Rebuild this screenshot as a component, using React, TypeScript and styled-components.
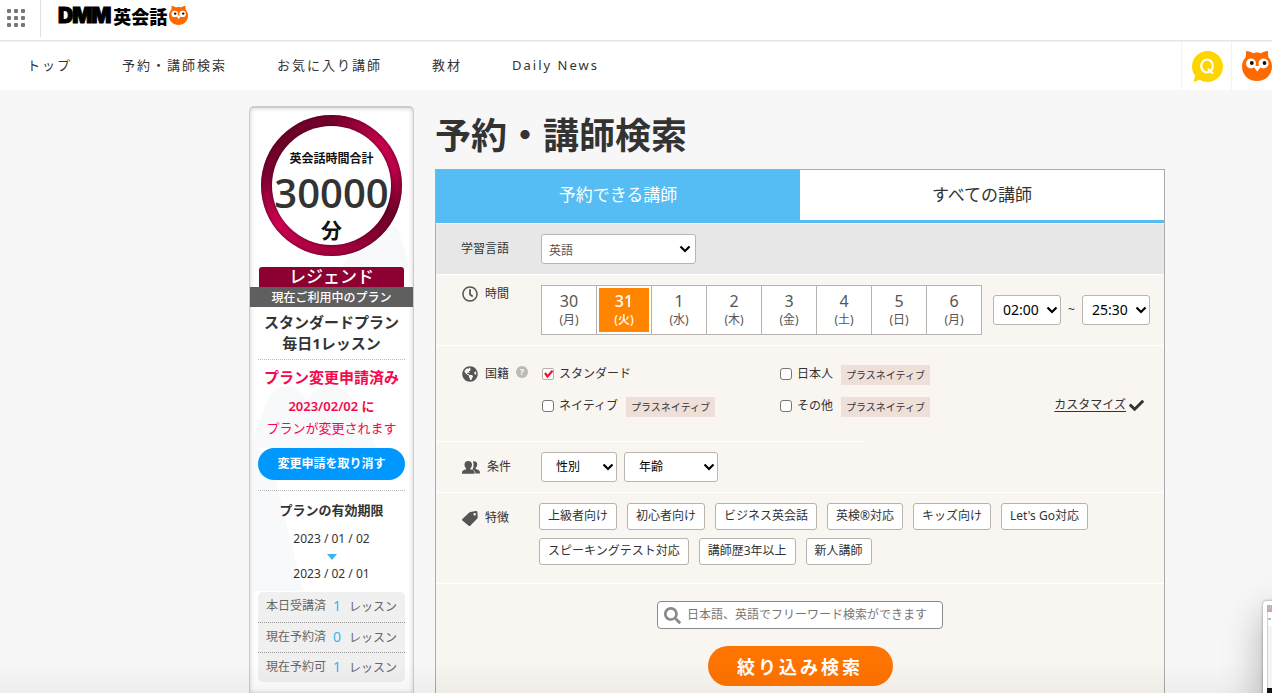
import React from 'react';
import styled, { createGlobalStyle } from 'styled-components';
import { FaRegClock, FaGlobeAmericas, FaCheck, FaSearch } from 'react-icons/fa';

const GlobalStyle = createGlobalStyle`
  *, *::before, *::after { box-sizing: border-box; }
  body {
    margin: 0;
    background: #f7f7f7;
    color: #333;
    font-family: "Noto Sans", "Noto Sans CJK JP", sans-serif;
    font-size: 12px;
    line-height: 18px;
  }
  button, input, select { font: inherit; color: inherit; margin: 0; }
  h1, h2, p, ul, dl, dd, dt { margin: 0; padding: 0; }
  ul { list-style: none; }
  a { color: inherit; text-decoration: none; }
  svg { display: block; }
`;

const Page = styled.div`
  position: relative;
  display: flex;
  flex-direction: column;
  height: 100vh;
  overflow: hidden;
`;

const BottomShade = styled.div`
  position: absolute;
  left: 0;
  right: 0;
  bottom: 0;
  height: 32px;
  background: linear-gradient(rgba(0, 0, 0, 0), rgba(0, 0, 0, 0.04));
  pointer-events: none;
`;

/* Header */
const TopBar = styled.header`
  flex: none;
  display: flex;
  align-items: center;
  height: 41px;
  padding: 0 0 3px 6px;
  background: #fff;
  border-bottom: 1px solid #e4e4e4;
`;

const AppsButton = styled.button`
  padding: 0;
  border: 0;
  background: none;
  width: 20px;
  height: 24px;
`;

const BarDivider = styled.span`
  align-self: stretch;
  width: 1px;
  margin: 0 17px 0 14px;
  background: #e0e0e0;
`;

const Logo = styled.a`
  display: flex;
  align-items: center;
  color: #000;
  padding-bottom: 6px;
`;

const LogoLatin = styled.span`
  font-family: Inter, sans-serif;
  font-weight: 900;
  font-size: 21px;
  line-height: 24px;
  letter-spacing: -1px;
  -webkit-text-stroke: 1px #000;
`;

const LogoKanji = styled.span`
  font-family: "Noto Sans CJK JP", sans-serif;
  font-weight: 900;
  font-size: 18px;
  line-height: 24px;
  margin: 0 2px 0 3px;
`;

const NavBar = styled.nav`
  flex: none;
  display: flex;
  height: 49px;
  background: #fff;
  border-top: 1px solid #f2f2f2;
  justify-content: space-between;
`;

const NavList = styled.ul`
  display: flex;
  align-items: center;
  gap: 50px;
  padding: 0 0 2px 27px;
  font-size: 13px;
  line-height: 20px;
  letter-spacing: 2px;
`;

const NavIcons = styled.div`
  display: flex;
`;

const NavIcon = styled.a`
  display: flex;
  align-items: center;
  padding: 0 0 0 10px;
  width: ${(p: { $w: number }) => p.$w}px;
  border-left: 1px solid #f2f2f2;
`;

/* Body */
const Body = styled.div`
  flex: 1;
  display: flex;
  gap: 21px;
  padding: 16px 107px 0 249px;
`;

const Side = styled.aside`
  position: relative;
  flex: none;
  width: 165px;
  background: #fff;
  border: solid #cbcbcb;
  border-width: 2px 1px 0;
  border-radius: 5px 5px 0 0;
  box-shadow: inset 0 0 5px rgba(0, 0, 0, 0.2);
  text-align: center;
  padding-top: 7px;
`;

const Hills = styled.svg`
  position: absolute;
  left: 3px;
  top: 0;
`;

const SideInner = styled.div`
  position: relative;
  display: flex;
  flex-direction: column;
`;

const Ring = styled.div`
  align-self: center;
  width: 141px;
  height: 141px;
  padding: 11px;
  border-radius: 50%;
  background: conic-gradient(#74002c, #c4004c 50deg, #b80048 75deg, #6d0028 115deg, #9c003c 160deg, #a80040 190deg, #cc0052 235deg, #7a0030 280deg, #6d0028 310deg, #74002c);
  box-shadow: inset 0 0 3px rgba(60, 0, 20, 0.8);
`;

const RingInner = styled.div`
  display: flex;
  flex-direction: column;
  align-items: center;
  height: 119px;
  padding-top: 24px;
  border-radius: 50%;
  background: #fff;
  box-shadow: 0 0 3px rgba(60, 0, 20, 0.8);
  color: #111;
  font-weight: 700;
`;

const RingTotal = styled.strong`
  font-family: "Open Sans", sans-serif;
  font-size: 40px;
  line-height: 50px;
  font-weight: 600;
  color: #333;
`;

const RingUnit = styled.span`
  font-size: 21px;
  line-height: 24px;
`;

const Rank = styled.div`
  margin: 11px 9px 0;
  height: 20px;
  border-radius: 3px 3px 0 0;
  background: #8c0032;
  color: #fff;
  font-size: 17px;
  line-height: 20px;
  font-weight: 500;
`;

const PlanCaption = styled.div`
  height: 20px;
  line-height: 21px;
  background: #5f5f5f;
  color: #fff;
  font-weight: 500;
`;

const Block = styled.div`
  margin: 0 8px;
  border-bottom: ${(p: { $rule?: boolean }) => (p.$rule ? '1px dotted #bbb' : '0')};
`;

const PlanName = styled.h2`
  font-size: 15px;
  line-height: 21px;
  font-weight: 700;
  padding: 5px 0;
`;

const Alert = styled.div`
  color: #f5094c;
  font-size: 13px;
  line-height: 22px;
  padding-top: 6px;
`;

const AlertTitle = styled.p`
  font-size: 15px;
  font-weight: 700;
  white-space: nowrap;
  margin-bottom: 7px;
`;

const AlertDate = styled.p`
  font-weight: 600;
`;

const CancelButton = styled.button`
  display: block;
  width: 100%;
  height: 32px;
  margin: 9px 0 10px;
  padding: 0;
  border: 0;
  border-radius: 16px;
  background: #0098ff;
  color: #fff;
  font-weight: 700;
`;

const Term = styled.div`
  display: flex;
  flex-direction: column;
  align-items: center;
  padding: 9px 0 9px;
`;

const TermTitle = styled.h2`
  font-size: 13px;
  line-height: 20px;
  font-weight: 700;
  margin-bottom: 10px;
`;

const Triangle = styled.span`
  margin: 6px 0 5px;
  border: solid transparent;
  border-width: 6px 5px 0;
  border-top-color: #3bb4f2;
`;

const Counts = styled.dl`
  border-radius: 5px;
  background: #f0f0f0;
  color: #666;
`;

const CountRow = styled.div`
  display: flex;
  justify-content: space-between;
  height: 30px;
  padding: 0 8px;
  line-height: 28px;
  & + & { border-top: 1px dotted #999; }
`;

const CountValue = styled.span`
  color: #3bb4f2;
  font-size: 14px;
  margin-right: 8px;
`;

const Main = styled.main`
  flex: 1;
  min-width: 0;
  display: flex;
  flex-direction: column;
`;

const Title = styled.h1`
  font-size: 36px;
  line-height: 52px;
  padding: 4px 0 7px;
  font-weight: 700;
`;

const Panel = styled.form`
  flex: 1;
  border: solid #aaa;
  border-width: 1px 1px 0;
  background: #f9f5f0;
`;

const Tabs = styled.div`
  display: grid;
  grid-template-columns: 1fr 1fr;
  height: 53px;
  border-bottom: 3px solid #55bdf3;
`;

const Tab = styled.button<{ $active?: boolean }>`
  border: 0;
  padding: 0 0 1px;
  font-size: 17px;
  color: ${(p) => (p.$active ? '#fff' : '#333')};
  background: ${(p) => (p.$active ? '#55bdf3' : '#fff')};
`;

const Row = styled.section<{ $grey?: boolean; $noRule?: boolean; $pad: string }>`
  display: flex;
  padding: ${(p) => p.$pad};
  border-top: ${(p) => (p.$noRule ? '0' : '1px solid #fff')};
  background: ${(p) => (p.$grey ? '#e7e7e7' : 'none')};
`;

const RowLabel = styled.div<{ $drop?: boolean }>`
  flex: none;
  display: flex;
  align-items: center;
  align-self: flex-start;
  gap: 7px;
  width: 80px;
  height: 18px;
  margin-top: ${(p) => (p.$drop ? 6 : 0)}px;
  white-space: nowrap;
  svg { color: #555; flex: none; margin-left: 1px; }
`;

const SelectBox = styled.span<{ $w: number }>`
  position: relative;
  display: block;
  flex: none;
  width: ${(p) => p.$w}px;
  height: 30px;
  svg { position: absolute; right: ${(p) => (p.$w > 100 ? 5 : 3)}px; top: 11px; pointer-events: none; }
`;

const SelectField = styled.select<{ $left: number; $size: number; $soft?: boolean }>`
  appearance: none;
  width: 100%;
  height: 30px;
  padding: ${(p) => (p.$soft ? 3 : 0)}px 16px 0 ${(p) => p.$left}px;
  border: 1px solid #bbb4b0;
  border-radius: 3px;
  background: #fff;
  color: ${(p) => (p.$soft ? '#555' : '#000')};
  font-size: ${(p) => p.$size}px;
`;

const Days = styled.div`
  display: flex;
  border: 1px solid #b9b3b0;
  background: #fff;
`;

const Day = styled.button<{ $on?: boolean }>`
  display: flex;
  flex-direction: column;
  align-items: center;
  width: 55px;
  height: 48px;
  padding: 5px 0 0;
  border: 0;
  background: ${(p) => (p.$on ? '#ff8500' : '#fff')};
  box-shadow: ${(p) => (p.$on ? 'inset 0 0 0 2px #fff' : 'none')};
  color: ${(p) => (p.$on ? '#fff' : '#555')};
  font-weight: ${(p) => (p.$on ? 500 : 400)};
  line-height: 18px;
  & + & { border-left: 1px solid #b9b3b0; }
  &:first-child { width: 54px; }
`;

const DayNumber = styled.span`
  font-size: 16px;
  line-height: 20px;
`;

const TimeRange = styled.div`
  display: flex;
  align-items: center;
  gap: 7px;
  margin-left: 11px;
`;

const Help = styled.button`
  width: 12px;
  height: 12px;
  padding: 0;
  margin: 0 0 4px 0;
  border: 0;
  border-radius: 50%;
  background: #bcbab7;
  color: #fff;
  font-size: 9px;
  line-height: 12px;
  font-weight: 700;
`;

const Nations = styled.div`
  display: grid;
  grid-template-columns: 238px 1fr auto;
  grid-auto-rows: 20px;
  row-gap: 12px;
  flex: 1;
`;

const Option = styled.div`
  display: flex;
  align-items: center;
`;

const OptionLabel = styled.label`
  display: flex;
  align-items: center;
  gap: 5px;
  padding-bottom: 3px;
  color: #333;
`;

const TickWrap = styled.span`
  position: relative;
  width: 12px;
  height: 12px;
  margin: 1px 0 0 1px;
  svg { position: absolute; left: 2px; top: 2px; pointer-events: none; }
`;

const Tick = styled.input`
  appearance: none;
  display: block;
  width: 12px;
  height: 12px;
  border: 1px solid #767676;
  border-radius: 3px;
  background: #fff;
  &:checked { border-color: #b5b0ac; border-radius: 2px; }
`;

const Plus = styled.span`
  margin-left: 8px;
  padding: 0 5px 0 5px;
  background: #eedfd9;
  font-size: 10px;
  line-height: 20px;
`;

const Customize = styled.a`
  display: flex;
  align-items: center;
  gap: 3px;
  color: #333;
  padding-bottom: 4px;
  span { text-decoration: underline; text-underline-offset: 2px; }
`;

const ShortRule = styled.hr`
  width: 428px;
  height: 1px;
  margin: 0;
  border: 0;
  background: #fff;
`;

const Selects = styled.div`
  display: flex;
  gap: 7px;
`;

const Features = styled.ul`
  display: flex;
  flex-wrap: wrap;
  gap: 8px 10px;
  margin-left: -2px;
`;

const Feature = styled.button`
  display: block;
  height: 27px;
  padding: 0 8px 2px;
  border: 1px solid #b9b3b0;
  border-radius: 3px;
  background: #fff;
  white-space: nowrap;
`;

const SearchArea = styled.div`
  display: flex;
  flex-direction: column;
  align-items: center;
  padding-top: 17px;
  border-top: 1px solid #fff;
`;

const SearchBox = styled.label`
  display: flex;
  align-items: center;
  gap: 6px;
  width: 286px;
  height: 28px;
  padding: 0 8px 0 6px;
  border: 1px solid #8a8a8a;
  border-radius: 4px;
  background: #fff;
  svg { color: #8a8a8a; flex: none; }
`;

const SearchInput = styled.input`
  flex: 1;
  min-width: 0;
  height: 22px;
  padding: 0 0 2px;
  border: 0;
  outline: 0;
  background: none;
  &::placeholder { color: #757575; opacity: 1; }
`;

const Submit = styled.button`
  width: 185px;
  height: 40px;
  margin-top: 17px;
  border: 0;
  border-radius: 20px;
  background: #ff7300;
  color: #fff;
  font-size: 18px;
  font-weight: 700;
  letter-spacing: 3px;
  padding: 2px 0 0;
`;

const Floating = styled.div`
  position: absolute;
  right: -100px;
  bottom: -20px;
  width: 109px;
  height: 112px;
  padding: 4px;
  border-radius: 4px;
  background: #fff;
  box-shadow: 0 0 3px rgba(0, 0, 0, 0.4), 0 14px 40px rgba(0, 0, 0, 0.3);
`;

const Owl = ({ size }: { size: number }) => (
  <svg width={size} height={size} viewBox="0 0 30 30" aria-hidden="true">
    <path fill="#ff6a00" d="M4 0c3 0 5 1 7 2.200 2-1 6-1 8 0C21 1 23 0 26 0c0 2 0 4.500.5 6.500C29 9 30 12 30 15.500 30 24 23.500 30 15 30S0 24 0 15.500C0 12 1 9 3.500 6.500 4 4.500 4 2 4 0z" />
    <circle cx="9" cy="12.500" r="5" fill="#fff" />
    <circle cx="21.500" cy="12.500" r="5" fill="#fff" />
    <path fill="#fff" d="M11 15h8.500l-4.200 5.500z" />
    <circle cx="9.800" cy="12" r="1.900" fill="#111" />
    <circle cx="22.500" cy="12" r="1.900" fill="#111" />
  </svg>
);

const Chevron = () => (
  <svg width="12" height="8" viewBox="0 0 12 8" aria-hidden="true">
    <path d="M1.500 1.500 6 6l4.500-4.500" fill="none" stroke="#000" strokeWidth="2.200" />
  </svg>
);

const PeopleIcon = () => (
  <svg width="18" height="13" viewBox="0 0 18 13" fill="currentColor" aria-hidden="true">
    <path d="M11 .3c2.300-.5 4.200.8 4.200 3 0 1.600-.7 2.900-1.500 3.500v1.100c1.800.7 4 1.100 4.200 3 .1.900.1 1.300.1 1.700h-4.600c0-2.200-1-3.200-3.200-4 .8-1 1.300-2.400 1.300-4.200 0-1.800-.2-3-.500-4.100z" />
    <path d="M6.200 0c2.500 0 3.800 1.500 3.800 3.600 0 1.600-.7 2.900-1.600 3.600v1c2 .7 4 1 4.200 3v1.500H0c0-.5 0-1 .1-1.600.2-1.900 2.200-2.300 4-2.900v-1C3.200 6.500 2.500 5.200 2.500 3.600 2.500 1.500 3.800 0 6.200 0z" />
  </svg>
);

const TagIcon = () => (
  <svg width="16" height="15" viewBox="0 0 16 15" aria-hidden="true">
    <path fill="currentColor" fillRule="evenodd" d="M8.500 1 14 0c.8 0 1.300.4 1.400 1.200l.3 5c0 .7-.2 1.100-.6 1.600l-6.600 6.600c-.7.700-1.500.700-2.100 0L.6 9.800c-.7-.8-.7-1.400 0-2.100L7 1.700c.4-.4.900-.6 1.500-.7zM12.700 2a1.300 1.300 0 1 0 0 2.600 1.300 1.300 0 0 0 0-2.600z" />
  </svg>
);

type SelectInputProps = { label: string; value: string; w: number; left?: number; size?: number; soft?: boolean };

const SelectInput = ({ label, value, w, left = 14, size = 12, soft }: SelectInputProps) => (
  <SelectBox $w={w}>
    <SelectField aria-label={label} $left={left} $size={size} $soft={soft}>
      <option>{value}</option>
    </SelectField>
    <Chevron />
  </SelectBox>
);

const Nation = ({ name, plus, checked }: { name: string; plus?: boolean; checked?: boolean }) => (
  <Option>
    <OptionLabel>
      <TickWrap>
        <Tick type="checkbox" defaultChecked={checked} />
        {checked && (
          <svg width="10" height="9" viewBox="0 0 10 9" aria-hidden="true">
            <path d="M1 3l2.500 3.500L8.500.8" fill="none" stroke="#f01030" strokeWidth="2.200" />
          </svg>
        )}
      </TickWrap>
      {name}
    </OptionLabel>
    {plus && <Plus>プラスネイティブ</Plus>}
  </Option>
);

const navItems = ['トップ', '予約・講師検索', 'お気に入り講師', '教材', 'Daily News'];
const days = [['30', '月'], ['31', '火'], ['1', '水'], ['2', '木'], ['3', '金'], ['4', '土'], ['5', '日'], ['6', '月']];
const features = ['上級者向け', '初心者向け', 'ビジネス英会話', '英検®対応', 'キッズ向け', "Let's Go対応", 'スピーキングテスト対応', '講師歴3年以上', '新人講師'];
const counts = [['本日受講済', '1'], ['現在予約済', '0'], ['現在予約可', '1']];

export default function App() {
  return (
    <Page>
      <GlobalStyle />
      <TopBar>
        <AppsButton type="button" aria-label="メニュー">
          <svg width="20" height="20" viewBox="0 0 20 20" fill="#777" aria-hidden="true">
            {[1, 8, 15].map((y) => [1, 8, 15].map((x) => <rect key={`${x}-${y}`} x={x} y={y - 1} width="4" height="4" rx="1" />))}
          </svg>
        </AppsButton>
        <BarDivider />
        <Logo href="#">
          <LogoLatin>DMM</LogoLatin>
          <LogoKanji>英会話</LogoKanji>
          <Owl size={19} />
        </Logo>
      </TopBar>
      <NavBar>
        <NavList>
          {navItems.map((item) => <li key={item}><a href="#">{item}</a></li>)}
        </NavList>
        <NavIcons>
          <NavIcon href="#" $w={50} aria-label="Q&A">
            <svg width="31" height="31" viewBox="0 0 31 31" aria-hidden="true">
              <path fill="#ffd500" d="M15.500 0C24 0 31 7 31 15.500S24 31 15.500 31c-3 0-5.500-.8-7.500-2.200L1.500 31l1.600-6.500C1 22 0 19 0 15.500 0 7 7 0 15.500 0z" />
              <ellipse cx="15" cy="15" rx="5.800" ry="6.500" fill="none" stroke="#fff" strokeWidth="2.200" />
              <path d="M16 18l5 4.500" stroke="#fff" strokeWidth="2.200" />
            </svg>
          </NavIcon>
          <NavIcon href="#" $w={41} aria-label="マイページ"><Owl size={30} /></NavIcon>
        </NavIcons>
      </NavBar>
      <Body>
        <Side>
          <Hills width="157" height="500" viewBox="0 0 157 500" fill="#f7f9fb" aria-hidden="true">
            <path d="M88 160l14-22q6-8 12-2l22-18q5-3 9 3l12 39z" />
            <path d="M0 330l14-36q8-16 20-16 12 0 20 14 12-16 28-14 16 4 28 34l14 28H0z" />
            <path d="M0 340h6l16 28 28 115H0z" />
          </Hills>
          <SideInner>
            <Ring>
              <RingInner>
                <span>英会話時間合計</span>
                <RingTotal>30000</RingTotal>
                <RingUnit>分</RingUnit>
              </RingInner>
            </Ring>
            <Rank>レジェンド</Rank>
            <PlanCaption>現在ご利用中のプラン</PlanCaption>
            <Block $rule>
              <PlanName>スタンダードプラン<br />毎日1レッスン</PlanName>
            </Block>
            <Block $rule>
              <Alert>
                <AlertTitle>プラン変更申請済み</AlertTitle>
                <AlertDate>2023/02/02 に</AlertDate>
                <p>プランが変更されます</p>
              </Alert>
              <CancelButton type="button">変更申請を取り消す</CancelButton>
            </Block>
            <Block>
              <Term>
                <TermTitle>プランの有効期限</TermTitle>
                <time dateTime="2023-01-02">2023 / 01 / 02</time>
                <Triangle />
                <time dateTime="2023-02-01">2023 / 02 / 01</time>
              </Term>
              <Counts>
                {counts.map(([name, n]) => (
                  <CountRow key={name}>
                    <dt>{name}</dt>
                    <dd><CountValue>{n}</CountValue>レッスン</dd>
                  </CountRow>
                ))}
              </Counts>
            </Block>
          </SideInner>
        </Side>
        <Main>
          <Title>予約・講師検索</Title>
          <Panel onSubmit={(e) => e.preventDefault()}>
            <Tabs>
              <Tab type="button" $active>予約できる講師</Tab>
              <Tab type="button">すべての講師</Tab>
            </Tabs>
            <Row $grey $pad="10px 25px 10px">
              <RowLabel $drop>学習言語</RowLabel>
              <SelectInput label="学習言語" value="英語" w={155} left={7} soft />
            </Row>
            <Row $pad="10px 14px 10px 25px">
              <RowLabel><FaRegClock size={16} />時間</RowLabel>
              <Days>
                {days.map(([n, d], i) => (
                  <Day type="button" key={n} $on={i === 1}>
                    <DayNumber>{n}</DayNumber>
                    <span>({d})</span>
                  </Day>
                ))}
              </Days>
              <TimeRange>
                <SelectInput label="開始時間" value="02:00" w={68} left={9} size={14} />
                <span>~</span>
                <SelectInput label="終了時間" value="25:30" w={68} left={9} size={14} />
              </TimeRange>
            </Row>
            <Row $pad="19px 20px 24px 25px">
              <RowLabel><FaGlobeAmericas size={16} />国籍<Help type="button" aria-label="国籍について">?</Help></RowLabel>
              <Nations>
                <Nation name="スタンダード" checked />
                <Nation name="日本人" plus />
                <span />
                <Nation name="ネイティブ" plus />
                <Nation name="その他" plus />
                <Customize href="#"><span>カスタマイズ</span><FaCheck size={15} /></Customize>
              </Nations>
            </Row>
            <ShortRule />
            <Row $noRule $pad="10px 25px">
              <RowLabel $drop><PeopleIcon />条件</RowLabel>
              <Selects>
                <SelectInput label="性別" value="性別" w={76} />
                <SelectInput label="年齢" value="年齢" w={94} />
              </Selects>
            </Row>
            <Row $pad="10px 25px 18px">
              <RowLabel $drop><TagIcon />特徴</RowLabel>
              <Features>
                {features.map((f) => <li key={f}><Feature type="button">{f}</Feature></li>)}
              </Features>
            </Row>
            <SearchArea>
              <SearchBox>
                <FaSearch size={17} />
                <SearchInput type="text" aria-label="フリーワード検索" placeholder="日本語、英語でフリーワード検索ができます" />
              </SearchBox>
              <Submit type="submit">絞り込み検索</Submit>
            </SearchArea>
          </Panel>
        </Main>
      </Body>
      <BottomShade />
      <Floating>
        <svg width="101" height="104" viewBox="0 0 101 104" aria-hidden="true">
          <rect width="101" height="104" fill="#f4f4f4" />
          <rect width="101" height="5" fill="#a9bccb" />
          <rect y="5" width="101" height="2" fill="#f09a86" />
          <rect y="7" width="101" height="14" fill="#fff" />
          <rect x="1" y="13" width="3" height="2" fill="#bbb" />
          <rect y="83" width="101" height="21" fill="#111" />
          <path d="M0 0v83" stroke="#aaa" />
        </svg>
      </Floating>
    </Page>
  );
}
